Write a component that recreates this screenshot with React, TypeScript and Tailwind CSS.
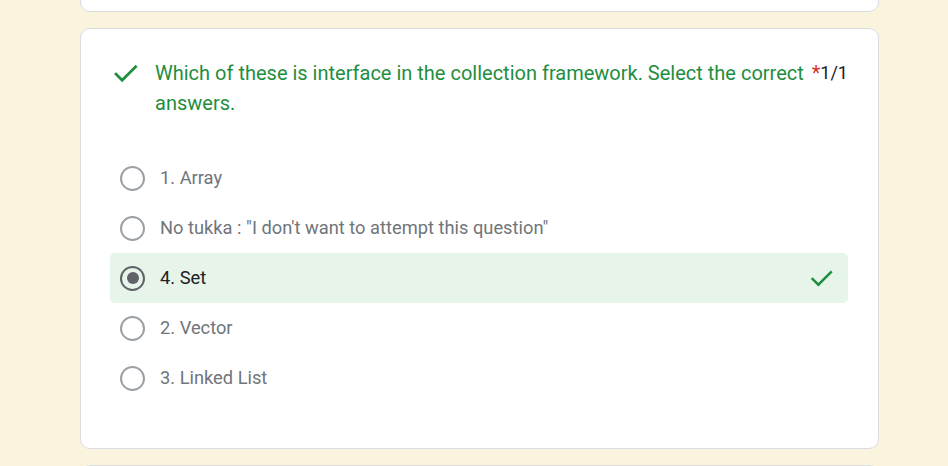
import React from "react";

const options = [
  { label: "1. Array", selected: false },
  { label: 'No tukka : "I don\'t want to attempt this question"', selected: false },
  { label: "4. Set", selected: true },
  { label: "2. Vector", selected: false },
  { label: "3. Linked List", selected: false },
];

function Check({ className }: { className?: string }) {
  return (
    <svg viewBox="0 0 24 24" className={className} fill="none">
      <path d="M3.5 12.5l5.5 5.5L21 6" stroke="#1e8e3e" strokeWidth="2.4" strokeLinecap="square" />
    </svg>
  );
}

export default function App() {
  return (
    <div
      className="w-[948px] h-[466px] overflow-hidden bg-[#faf3de] flex flex-col gap-4 items-start pl-[80px]"
      style={{ fontFamily: "Roboto, 'Liberation Sans', sans-serif" }}
    >
      <div className="w-[799px] h-[28px] -mt-[16px] shrink-0 bg-white border border-[#dadce0] rounded-[10px]" />
      <div className="w-[799px] shrink-0 bg-white border border-[#dadce0] rounded-[10px] pt-[29px] pb-[45px] pl-[29px] pr-[30px]">
        <div className="flex items-start">
          <div className="w-[30px] h-[30px] flex items-center justify-center shrink-0">
            <Check className="w-[27px] h-[27px]" />
          </div>
          <div className="ml-[15px] w-[652px] text-[20px] leading-[30px] text-[#1e8e3e]">
            Which of these is interface in the collection framework. Select the correct answers.
          </div>
          <div className="ml-[7px] text-[20px] leading-[30px] text-[#d93025] shrink-0">*</div>
          <div className="text-[18px] leading-[30px] text-[#202124] shrink-0">1/1</div>
        </div>
        <div className="mt-[35px] flex flex-col">
          {options.map((o) => (
            <div
              key={o.label}
              className={`h-[50px] flex items-center pl-[10px] pr-[14px] rounded-[5px] ${o.selected ? "bg-[#e6f4ea]" : ""}`}
            >
              {o.selected ? (
                <div className="w-[25px] h-[25px] rounded-full border-[2px] border-[#5f6368] flex items-center justify-center shrink-0">
                  <div className="w-[12px] h-[12px] rounded-full bg-[#5f6368]" />
                </div>
              ) : (
                <div className="w-[25px] h-[25px] rounded-full border-[2px] border-[#9aa0a6] shrink-0" />
              )}
              <div
                className={`ml-[15px] text-[18.3px] flex-1 ${o.selected ? "text-[#202124]" : "text-[#70757a]"}`}
              >
                {o.label}
              </div>
              {o.selected && <Check className="w-[25px] h-[25px]" />}
            </div>
          ))}
        </div>
      </div>
      <div className="w-[799px] h-[40px] shrink-0 bg-white border border-[#dadce0] rounded-[10px]" />
    </div>
  );
}
